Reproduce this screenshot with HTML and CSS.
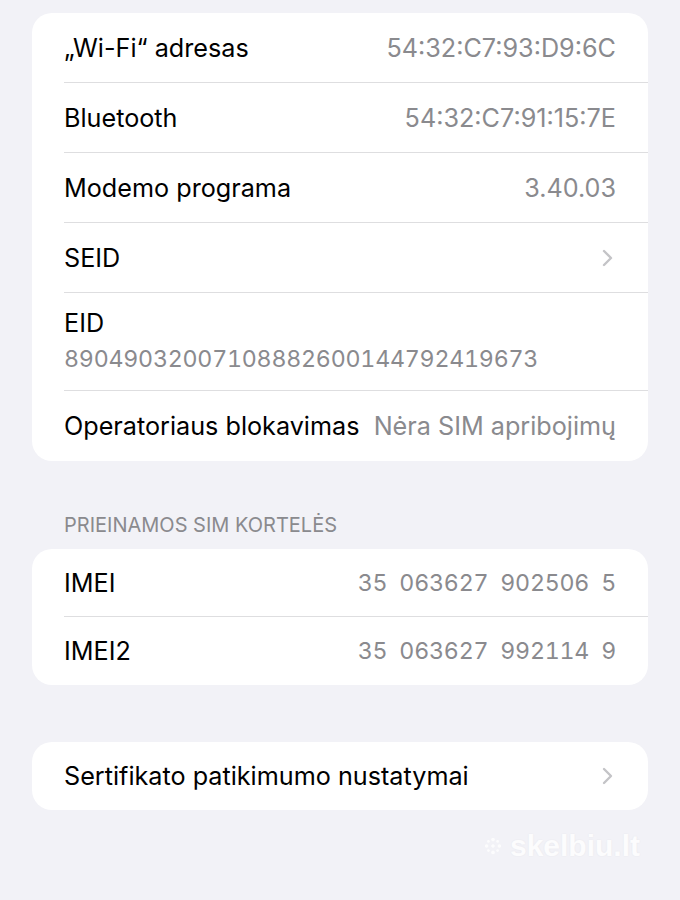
FILE: index.html
```html
<!DOCTYPE html>
<html lang="lt">
  <head>
    <meta charset="UTF-8" />
    <meta name="viewport" content="width=device-width, initial-scale=1.0" />
    <title>Apie</title>
    <link rel="stylesheet" href="styles.css">
  </head>
  <body>
    <div class="page">
      <div class="card">
        <div class="row">
          <span class="label">„Wi-Fi“ adresas</span>
          <span class="value">54:32:C7:93:D9:6C</span>
        </div>
        <div class="row">
          <span class="label">Bluetooth</span>
          <span class="value">54:32:C7:91:15:7E</span>
        </div>
        <div class="row">
          <span class="label">Modemo programa</span>
          <span class="value">3.40.03</span>
        </div>
        <div class="row">
          <span class="label">SEID</span>
          <svg class="chevron" viewBox="0 0 12 18" width="12" height="18">
            <path d="M2 2 L9 9 L2 16" />
          </svg>
        </div>
        <div class="row stacked">
          <span class="label">EID</span>
          <span class="value num">89049032007108882600144792419673</span>
        </div>
        <div class="row">
          <span class="label">Operatoriaus blokavimas</span>
          <span class="value">Nėra SIM apribojimų</span>
        </div>
      </div>

      <div class="section-title">Prieinamos SIM kortelės</div>
      <div class="card short">
        <div class="row">
          <span class="label">IMEI</span>
          <span class="value num">35 063627 902506 5</span>
        </div>
        <div class="row">
          <span class="label">IMEI2</span>
          <span class="value num">35 063627 992114 9</span>
        </div>
      </div>

      <div class="card short card-gap">
        <div class="row">
          <span class="label">Sertifikato patikimumo nustatymai</span>
          <svg class="chevron" viewBox="0 0 12 18" width="12" height="18">
            <path d="M2 2 L9 9 L2 16" />
          </svg>
        </div>
      </div>

      <div class="watermark">
        <svg viewBox="0 0 24 24" width="22" height="22">
          <circle cx="12" cy="5" r="2" />
          <circle cx="12" cy="19" r="2" />
          <circle cx="5" cy="12" r="2" />
          <circle cx="19" cy="12" r="2" />
          <circle cx="7" cy="7" r="1.5" />
          <circle cx="17" cy="7" r="1.5" />
          <circle cx="7" cy="17" r="1.5" />
          <circle cx="17" cy="17" r="1.5" />
          <circle cx="12" cy="12" r="2" />
        </svg>
        <span>skelbiu.lt</span>
      </div>
    </div>
  </body>
</html>
```

FILE: styles.css
```css
body {
  margin: 0;
  background-color: #f2f2f7;
  font-family: Inter, "Noto Sans", sans-serif;
  color: #000;
}
.page {
  padding: 13px 32px 0;
}
.card {
  background-color: #fff;
  border-radius: 20px;
  overflow: hidden;
}
.card-gap {
  margin-top: 57px;
}
.row {
  display: flex;
  align-items: center;
  justify-content: space-between;
  height: 69px;
  margin-left: 32px;
  padding-right: 32px;
  border-bottom: 1px solid #dedee0;
}
.row:last-child {
  height: 70px;
  border-bottom: none;
}
.short .row {
  height: 67px;
}
.short .row:last-child {
  height: 68px;
}
.row.stacked {
  flex-direction: column;
  align-items: flex-start;
  justify-content: flex-start;
  height: auto;
  padding-top: 15px;
  padding-bottom: 15px;
}
.label {
  font-size: 25.2px;
  line-height: 30px;
  white-space: nowrap;
}
.value {
  font-size: 25.2px;
  line-height: 30px;
  color: #8a8a8e;
  white-space: nowrap;
}
.value.num {
  font-size: 23.2px;
  letter-spacing: -0.22px;
  word-spacing: 6px;
  font-feature-settings: "tnum";
}
.stacked .value {
  margin-top: 5px;
  line-height: 32px;
}
.chevron {
  fill: none;
  stroke: #c4c4c7;
  stroke-width: 2.4;
  stroke-linecap: round;
  stroke-linejoin: round;
  margin-right: 2px;
}
.section-title {
  margin: 52px 0 12px 32px;
  font-size: 20px;
  line-height: 24px;
  color: #8a8a8e;
  text-transform: uppercase;
}
.watermark {
  display: flex;
  justify-content: flex-end;
  align-items: center;
  gap: 6px;
  margin-top: 19px;
  padding-right: 8px;
  color: #fff;
  font-family: "Liberation Sans", sans-serif;
  font-size: 30px;
  font-weight: bold;
  text-shadow: 0 0 2px rgba(0, 0, 0, 0.06);
  opacity: 0.8;
}
.watermark svg {
  fill: #fff;
}
```
